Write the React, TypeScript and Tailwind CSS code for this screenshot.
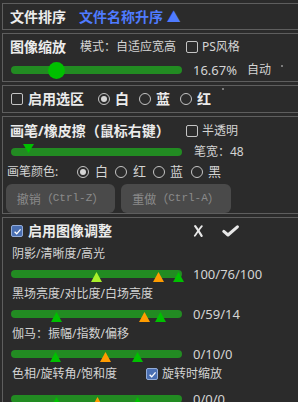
import React from "react";

function Checkbox({ checked = false }: { checked?: boolean }) {
  return checked ? (
    <span className="flex-none w-[12px] h-[12px] rounded-[2px] border border-[#93acd8] bg-[#4a6fb2] flex items-center justify-center">
      <svg width="9" height="9" viewBox="0 0 10 10">
        <path d="M1.8 5.3 L4.1 7.6 L8.4 2.6" stroke="#ffffff" strokeWidth="1.5" fill="none" />
      </svg>
    </span>
  ) : (
    <span className="flex-none w-[12px] h-[12px] rounded-[2px] border border-[#c4c4c4]" />
  );
}

function Radio({ checked = false }: { checked?: boolean }) {
  return (
    <span className="flex-none w-[12px] h-[12px] rounded-full border border-[#c4c4c4] flex items-center justify-center">
      {checked && <span className="w-[6px] h-[6px] rounded-full bg-[#d6d6d6]" />}
    </span>
  );
}

type Mark = { x: number; color: string };

function UpTri({ x, color }: Mark) {
  return (
    <svg
      className="absolute top-[2px]"
      style={{ left: x - 11 - 5.5 }}
      width="11"
      height="10"
      viewBox="0 0 11 10"
    >
      <polygon points="5.5,0 11,10 0,10" fill={color} />
    </svg>
  );
}

const G = "#00c000";
const O = "#ff9c00";
const Y = "#a8f02a";

function Track({ children }: { children?: React.ReactNode }) {
  return <div className="relative flex-none w-[171px] h-[8px] rounded-full bg-[#228b22]">{children}</div>;
}

function AdjustSlider({ marks, value }: { marks: Mark[]; value: string }) {
  return (
    <div className="h-[20px] flex items-center pl-[8px]">
      <Track>
        {marks.map((m, i) => (
          <UpTri key={i} x={m.x} color={m.color} />
        ))}
      </Track>
      <span className="ml-[11px] text-[13px] text-[#d4d4d4]">{value}</span>
    </div>
  );
}

function LabelRow({ children }: { children: React.ReactNode }) {
  return <div className="h-[20px] flex items-center pl-[9px] text-[12px] text-[#d4d4d4]">{children}</div>;
}

export default function App() {
  return (
    <div className="w-[298px] h-[402px] overflow-hidden bg-[#2b2b2b] pt-[3px] pl-[2px] flex flex-col gap-[3px] font-['Noto_Sans','Noto_Sans_CJK_SC',sans-serif] leading-none select-none">
      {/* Panel 1 */}
      <div className="flex-none w-[400px] border-l border-t border-b border-[#5e5e5e]">
        <div className="h-[25px] flex items-center pl-[7px]">
          <span className="text-[14px] font-bold text-[#ececec]">文件排序</span>
          <span className="ml-[13px] text-[14px] font-bold text-[#4f7bff]">文件名称升序 ▲</span>
        </div>
      </div>

      {/* Panel 2 */}
      <div className="relative flex-none w-[400px] border-l border-t border-b border-[#5e5e5e]">
        <div className="h-[25px] flex items-center pl-[7px]">
          <span className="w-[70px] text-[14px] font-bold text-[#ececec]">图像缩放</span>
          <span className="w-[106px] text-[12px] text-[#d4d4d4]">模式：自适应宽高</span>
          <Checkbox />
          <span className="ml-[4px] text-[12px] text-[#d4d4d4]">PS风格</span>
        </div>
        <div className="h-[22px] flex items-center pl-[8px]">
          <Track>
            <span className="absolute left-[36.5px] top-[-4.5px] w-[17px] h-[17px] rounded-full bg-[#00c000]" />
          </Track>
          <span className="ml-[11px] text-[13px] text-[#d4d4d4]">16.67%</span>
          <span className="ml-[10px] text-[12px] text-[#d4d4d4]">自动</span>
        </div>
        <span className="absolute left-[278px] top-[31px] w-[2px] h-[2px] bg-[#7a7a7a]" />
      </div>

      {/* Panel 3 */}
      <div className="relative flex-none w-[400px] border-l border-t border-b border-[#5e5e5e]">
        <div className="h-[26px] flex items-center pl-[8px] text-[14px] font-bold text-[#ececec]">
          <Checkbox />
          <span className="ml-[5px] w-[70px]">启用选区</span>
          <Radio checked />
          <span className="ml-[5px] w-[24px]">白</span>
          <Radio />
          <span className="ml-[5px] w-[24px]">蓝</span>
          <Radio />
          <span className="ml-[5px]">红</span>
        </div>
        <span className="absolute left-[219px] top-[2px] w-[2px] h-[2px] bg-[#7a7a7a]" />
      </div>

      {/* Panel 4 */}
      <div className="flex-none w-[400px] border-l border-t border-b border-[#5e5e5e]">
        <div className="h-[28px] flex items-center pl-[7px]">
          <span className="w-[176px] text-[14px] font-bold text-[#ececec]">画笔/橡皮擦（鼠标右键）</span>
          <Checkbox />
          <span className="ml-[4px] text-[12px] text-[#d4d4d4]">半透明</span>
        </div>
        <div className="h-[14px] flex items-center pl-[8px]">
          <Track>
            <svg className="absolute left-[11.5px] top-[-4px]" width="11" height="9" viewBox="0 0 11 9">
              <polygon points="0,0 11,0 5.5,9" fill="#00c000" />
            </svg>
          </Track>
          <span className="ml-[12px] text-[12px] text-[#d4d4d4]">笔宽：48</span>
        </div>
        <div className="h-[25px] flex items-center pl-[4px] text-[#d4d4d4]">
          <span className="w-[70px] text-[12px]">画笔颜色:</span>
          <Radio checked />
          <span className="ml-[6px] w-[20px] text-[13px]">白</span>
          <Radio />
          <span className="ml-[6px] w-[20px] text-[13px]">红</span>
          <Radio />
          <span className="ml-[5px] w-[21px] text-[13px]">蓝</span>
          <Radio />
          <span className="ml-[5px] text-[13px]">黑</span>
        </div>
        <div className="h-[29px] flex items-stretch pl-[3px] gap-[6px]">
          <button className="w-[109px] rounded-[6px] bg-[#4a4a4a] text-[#8a8a8a] text-[12px] flex items-center justify-center font-['Noto_Sans_CJK_SC',sans-serif]">
            撤销（<span className="text-[11px] font-['Liberation_Mono',monospace]">Ctrl-Z</span>）
          </button>
          <button className="w-[110px] rounded-[6px] bg-[#4a4a4a] text-[#8a8a8a] text-[12px] flex items-center justify-center font-['Noto_Sans_CJK_SC',sans-serif]">
            重做（<span className="text-[11px] font-['Liberation_Mono',monospace]">Ctrl-A</span>）
          </button>
        </div>
      </div>

      {/* Panel 5 */}
      <div className="flex-1 w-[400px] border-l border-t border-[#5e5e5e]">
        <div className="h-[26px] flex items-center pl-[8px]">
          <Checkbox checked />
          <span className="ml-[5px] w-[165px] text-[14px] font-bold text-[#ececec]">启用图像调整</span>
          <svg width="11" height="12" viewBox="0 0 11 12">
            <path d="M2.2 1.2 C4.5 4.2 6.5 7.5 8.6 10.8" stroke="#e8e8e8" strokeWidth="2.2" strokeLinecap="round" fill="none" />
            <path d="M8.8 1.2 C6.2 4.2 4.2 7.5 1.8 10.8" stroke="#e8e8e8" strokeWidth="1.8" strokeLinecap="round" fill="none" />
          </svg>
          <svg className="ml-[18px]" width="17" height="12" viewBox="0 0 17 12">
            <path d="M1.8 6.4 L6 10 L15.4 1.8" stroke="#e8e8e8" strokeWidth="3" strokeLinecap="round" strokeLinejoin="round" fill="none" />
          </svg>
        </div>
        <LabelRow>阴影/清晰度/高光</LabelRow>
        <AdjustSlider
          marks={[
            { x: 96.5, color: Y },
            { x: 158, color: O },
            { x: 178.5, color: G },
          ]}
          value="100/76/100"
        />
        <LabelRow>黑场亮度/对比度/白场亮度</LabelRow>
        <AdjustSlider
          marks={[
            { x: 56, color: G },
            { x: 144, color: O },
            { x: 160, color: G },
          ]}
          value="0/59/14"
        />
        <LabelRow>伽马：振幅/指数/偏移</LabelRow>
        <AdjustSlider
          marks={[
            { x: 55.5, color: G },
            { x: 105, color: O },
            { x: 137.5, color: G },
          ]}
          value="0/10/0"
        />
        <LabelRow>
          <span className="w-[134px]">色相/旋转角/饱和度</span>
          <Checkbox checked />
          <span className="ml-[4px]">旋转时缩放</span>
        </LabelRow>
        <div className="mt-[5px]">
          <AdjustSlider
            marks={[
              { x: 56, color: G },
              { x: 97, color: O },
              { x: 137.5, color: G },
            ]}
            value="0/0/0"
          />
        </div>
      </div>
    </div>
  );
}
